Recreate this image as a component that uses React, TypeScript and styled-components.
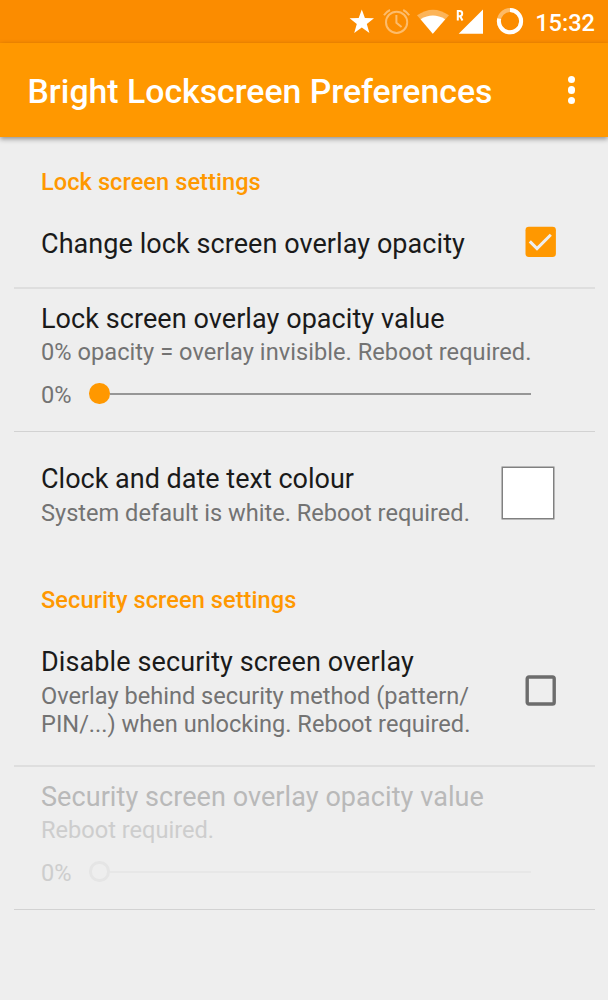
import React from "react";
import styled, { createGlobalStyle } from "styled-components";

const GlobalStyle = createGlobalStyle`
  * { box-sizing: border-box; }
  body { margin: 0; background: #eeeeee; font-family: Roboto, sans-serif; }
`;

const Screen = styled.div`
  width: 608px;
  height: 1000px;
  overflow: hidden;
  background: #eeeeee;
  display: flex;
  flex-direction: column;
`;

const StatusBar = styled.div`
  flex: none;
  height: 43px;
  padding-right: 13px;
  background: #fb8c00;
  display: flex;
  justify-content: flex-end;
`;

const StatusIcons = styled.svg`
  display: block;
  width: 190px;
  height: 43px;
`;

const Time = styled.span`
  margin-left: 7px;
  padding-top: 9px;
  font-size: 23.6px;
  line-height: 28px;
  font-weight: 500;
  color: #fff;
`;

const AppBar = styled.header`
  flex: none;
  height: 94px;
  padding: 4px 33px 0 27.5px;
  background: #ff9800;
  box-shadow: 0 2px 5px rgba(0, 0, 0, 0.4);
  display: flex;
  align-items: center;
  justify-content: space-between;
`;

const Heading = styled.h1`
  margin: 0;
  font-size: 33.8px;
  line-height: 40px;
  font-weight: 500;
  color: #fff;
  white-space: nowrap;
`;

const Overflow = styled.div`
  display: flex;
  flex-direction: column;
  gap: 3px;
  margin-top: -4px;
`;

const Dot = styled.span`
  width: 7.4px;
  height: 7.4px;
  border-radius: 50%;
  background: #fff;
`;

const Category = styled.h2`
  flex: none;
  margin: 0;
  height: 62px;
  padding: 31px 41px 0;
  font-size: 23.6px;
  line-height: 28px;
  font-weight: 500;
  letter-spacing: 0.06px;
  color: #ff9800;
`;

const Preference = styled.section<{ $height: number; $top: number; $line?: number }>`
  flex: none;
  height: ${(p) => p.$height}px;
  margin: 0 13px 0 14px;
  padding: ${(p) => p.$top}px 41px 0 27px;
  border-bottom: ${(p) => p.$line ?? 0}px solid ${(p) => (p.$line === 1 ? "#d2d2d2" : "#dedede")};
  display: flex;
  justify-content: space-between;
`;

const Body = styled.div`
  flex: 1;
  min-width: 0;
`;

const Title = styled.div<{ $disabled?: boolean; $tracking?: number }>`
  font-size: 27px;
  line-height: 32px;
  letter-spacing: ${(p) => p.$tracking ?? 0.07}px;
  white-space: nowrap;
  color: ${(p) => (p.$disabled ? "#b9b9b9" : "#1a1a1a")};
`;

const Summary = styled.div<{ $disabled?: boolean; $gap?: number; $tracking?: number }>`
  margin-top: ${(p) => p.$gap ?? 3.5}px;
  font-size: 23.6px;
  line-height: 28px;
  letter-spacing: ${(p) => p.$tracking ?? 0}px;
  white-space: nowrap;
  color: ${(p) => (p.$disabled ? "#cdcdcd" : "#737373")};
`;

const SliderRow = styled.div`
  margin-top: 15px;
  display: flex;
`;

const Value = styled.span<{ $disabled?: boolean }>`
  flex: none;
  width: 48px;
  font-size: 23.6px;
  line-height: 28px;
  color: ${(p) => (p.$disabled ? "#cdcdcd" : "#737373")};
`;

const Slider = styled.div`
  flex: none;
  width: 441.5px;
  height: 26px;
  display: flex;
  align-items: center;
`;

const Thumb = styled.span<{ $disabled?: boolean }>`
  width: 20.5px;
  height: 20.5px;
  border-radius: 50%;
  background: ${(p) => (p.$disabled ? "transparent" : "#ff9800")};
  border: ${(p) => (p.$disabled ? "3.4px solid #e5e5e5" : "none")};
`;

const Track = styled.span<{ $disabled?: boolean }>`
  flex: 1;
  height: 2px;
  background: ${(p) => (p.$disabled ? "#e7e7e7" : "#969696")};
`;

const CheckIcon = styled.svg<{ $top: number }>`
  flex: none;
  width: 31px;
  height: 31px;
  margin: ${(p) => p.$top}px -2px 0 0;
`;

const Swatch = styled.div`
  flex: none;
  width: 52px;
  height: 52px;
  margin-top: 4px;
  background: #fff;
  border: 1px solid #808080;
  box-shadow: 0 0 0 0.5px #808080;
`;

function OpacitySlider({ disabled }: { disabled?: boolean }) {
  return (
    <SliderRow>
      <Value $disabled={disabled}>0%</Value>
      <Slider>
        <Thumb $disabled={disabled} />
        <Track $disabled={disabled} />
      </Slider>
    </SliderRow>
  );
}

export default function App() {
  return (
    <Screen>
      <GlobalStyle />
      <StatusBar>
        <StatusIcons viewBox="338 0 190 43" fill="#fff">
          <path d="M361.8 9.5l3.1 8.6 9.1.2-7.2 5.6 2.6 9-7.6-5.3-7.6 5.3 2.6-9-7.2-5.6 9.1-.2z" />
          <g fill="none" stroke="#fff" strokeOpacity=".42" strokeWidth="2">
            <circle cx="396.6" cy="22.3" r="10.6" />
            <path d="M396.4 15v7.8l5.2 4.2M384 15.3q2.2-3.5 6-5.3M409.2 15.3q-2.2-3.5-6-5.3" />
          </g>
          <path fillOpacity=".35" d="M417 15.3Q433 4 449 15.3L432.8 33.7z" />
          <path d="M420.6 19.2q12.2-7.5 24.6 0L432.8 33.7z" />
          <path d="M483 9.5v24.2h-24.3z" />
          <path d="M457.8 20.5V11h2q2.4 0 2.4 2.6t-2.4 2.6h-2M460 16l2.5 4.5" fill="none" stroke="#fff" strokeWidth="2" />
          <circle cx="510" cy="21.2" r="11.1" fill="none" stroke="#fff" strokeOpacity=".4" strokeWidth="4" />
          <path d="M510 10.1a11.1 11.1 0 1 1-10.8 8.5" fill="none" stroke="#fff" strokeWidth="4" />
        </StatusIcons>
        <Time>15:32</Time>
      </StatusBar>
      <AppBar>
        <Heading>Bright Lockscreen Preferences</Heading>
        <Overflow>
          <Dot />
          <Dot />
          <Dot />
        </Overflow>
      </AppBar>

      <Category>Lock screen settings</Category>
      <Preference $height={90} $top={29} $line={2}>
        <Body>
          <Title>Change lock screen overlay opacity</Title>
        </Body>
        <CheckIcon $top={-2} viewBox="0 0 31 31">
          <rect x=".5" y=".8" width="30.4" height="30.2" rx="3.4" fill="#ff9800" />
          <path d="M4.8 15.4l7.2 7.2L25.8 8.8" fill="none" stroke="#eee" strokeWidth="3" />
        </CheckIcon>
      </Preference>
      <Preference $height={143} $top={14} $line={1}>
        <Body>
          <Title>Lock screen overlay opacity value</Title>
          <Summary $gap={2.5} $tracking={0.04}>
            0% opacity = overlay invisible. Reboot required.
          </Summary>
          <OpacitySlider />
        </Body>
      </Preference>
      <Preference $height={123} $top={31}>
        <Body>
          <Title $tracking={0}>Clock and date text colour</Title>
          <Summary>System default is white. Reboot required.</Summary>
        </Body>
        <Swatch />
      </Preference>

      <Category>Security screen settings</Category>
      <Preference $height={150} $top={29} $line={2}>
        <Body>
          <Title $tracking={0.11}>Disable security screen overlay</Title>
          <Summary>
            Overlay behind security method (pattern/
            <br />
            PIN/...) when unlocking. Reboot required.
          </Summary>
        </Body>
        <CheckIcon $top={29} viewBox="0 0 31 31">
          <rect x="2.2" y="2" width="27" height="27" rx="1.8" fill="none" stroke="#6c6c6c" strokeWidth="3.4" />
        </CheckIcon>
      </Preference>
      <Preference $height={143} $top={14} $line={1}>
        <Body>
          <Title $disabled>Security screen overlay opacity value</Title>
          <Summary $disabled $gap={2.5}>
            Reboot required.
          </Summary>
          <OpacitySlider disabled />
        </Body>
      </Preference>
    </Screen>
  );
}
